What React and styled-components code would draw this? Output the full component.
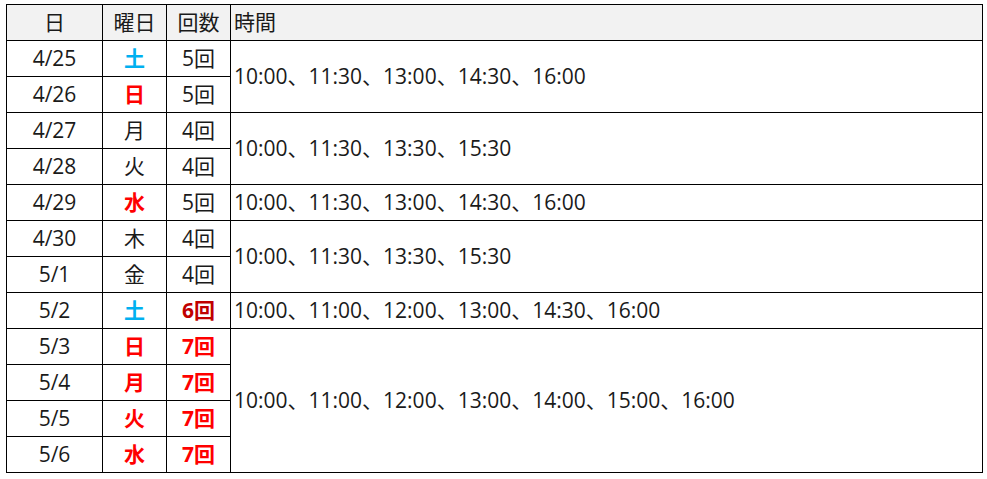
import React from 'react'
import styled, { createGlobalStyle } from 'styled-components'

const GlobalStyle = createGlobalStyle`
  html, body {
    margin: 0;
    padding: 0;
    background: #ffffff;
  }
`

const Page = styled.div`
  padding: 4px 0 0 6px;
  font-family: 'Open Sans', 'Noto Sans CJK JP', sans-serif;
  color: #1a1a1a;
`

const Table = styled.table`
  border-collapse: collapse;
  table-layout: fixed;
  width: 977px;
  font-size: 21px;
`

const HeadCell = styled.th`
  height: 35px;
  padding: 0 3px;
  background: #f2f2f2;
  border: 1px solid #000;
  font-weight: 400;
  text-align: ${({ left }) => (left ? 'left' : 'center')};
  line-height: 1;
`

const Cell = styled.td`
  height: 35px;
  padding: 0 3px;
  border: 1px solid #000;
  text-align: center;
  line-height: 1;
  color: ${({ tone }) => tone || '#1a1a1a'};
  font-weight: ${({ strong }) => (strong ? 700 : 400)};
`

const TimeCell = styled.td`
  padding: 0 3px;
  border: 1px solid #000;
  text-align: left;
  vertical-align: middle;
  line-height: 1;
  white-space: nowrap;
`

const BLUE = '#00b0f0'
const RED = '#ff0000'
const DARK_RED = '#c00000'

const TIMES_A = '10:00、11:30、13:00、14:30、16:00'
const TIMES_B = '10:00、11:30、13:30、15:30'
const TIMES_C = '10:00、11:00、12:00、13:00、14:30、16:00'
const TIMES_D = '10:00、11:00、12:00、13:00、14:00、15:00、16:00'

const rows = [
  { date: '4/25', day: '土', dayTone: BLUE, count: '5回', times: TIMES_A, span: 2 },
  { date: '4/26', day: '日', dayTone: RED, count: '5回' },
  { date: '4/27', day: '月', count: '4回', times: TIMES_B, span: 2 },
  { date: '4/28', day: '火', count: '4回' },
  { date: '4/29', day: '水', dayTone: RED, count: '5回', times: TIMES_A, span: 1 },
  { date: '4/30', day: '木', count: '4回', times: TIMES_B, span: 2 },
  { date: '5/1', day: '金', count: '4回' },
  { date: '5/2', day: '土', dayTone: BLUE, count: '6回', countTone: DARK_RED, times: TIMES_C, span: 1 },
  { date: '5/3', day: '日', dayTone: RED, count: '7回', countTone: RED, times: TIMES_D, span: 4 },
  { date: '5/4', day: '月', dayTone: RED, count: '7回', countTone: RED },
  { date: '5/5', day: '火', dayTone: RED, count: '7回', countTone: RED },
  { date: '5/6', day: '水', dayTone: RED, count: '7回', countTone: RED },
]

export default function App() {
  return (
    <Page>
      <GlobalStyle />
      <Table>
        <colgroup>
          <col style={{ width: 96 }} />
          <col style={{ width: 64 }} />
          <col style={{ width: 64 }} />
          <col />
        </colgroup>
        <thead>
          <tr>
            <HeadCell>日</HeadCell>
            <HeadCell>曜日</HeadCell>
            <HeadCell>回数</HeadCell>
            <HeadCell left>時間</HeadCell>
          </tr>
        </thead>
        <tbody>
          {rows.map((r) => (
            <tr key={r.date}>
              <Cell>{r.date}</Cell>
              <Cell tone={r.dayTone} strong={!!r.dayTone}>{r.day}</Cell>
              <Cell tone={r.countTone} strong={!!r.countTone}>{r.count}</Cell>
              {r.times && <TimeCell rowSpan={r.span}>{r.times}</TimeCell>}
            </tr>
          ))}
        </tbody>
      </Table>
    </Page>
  )
}
